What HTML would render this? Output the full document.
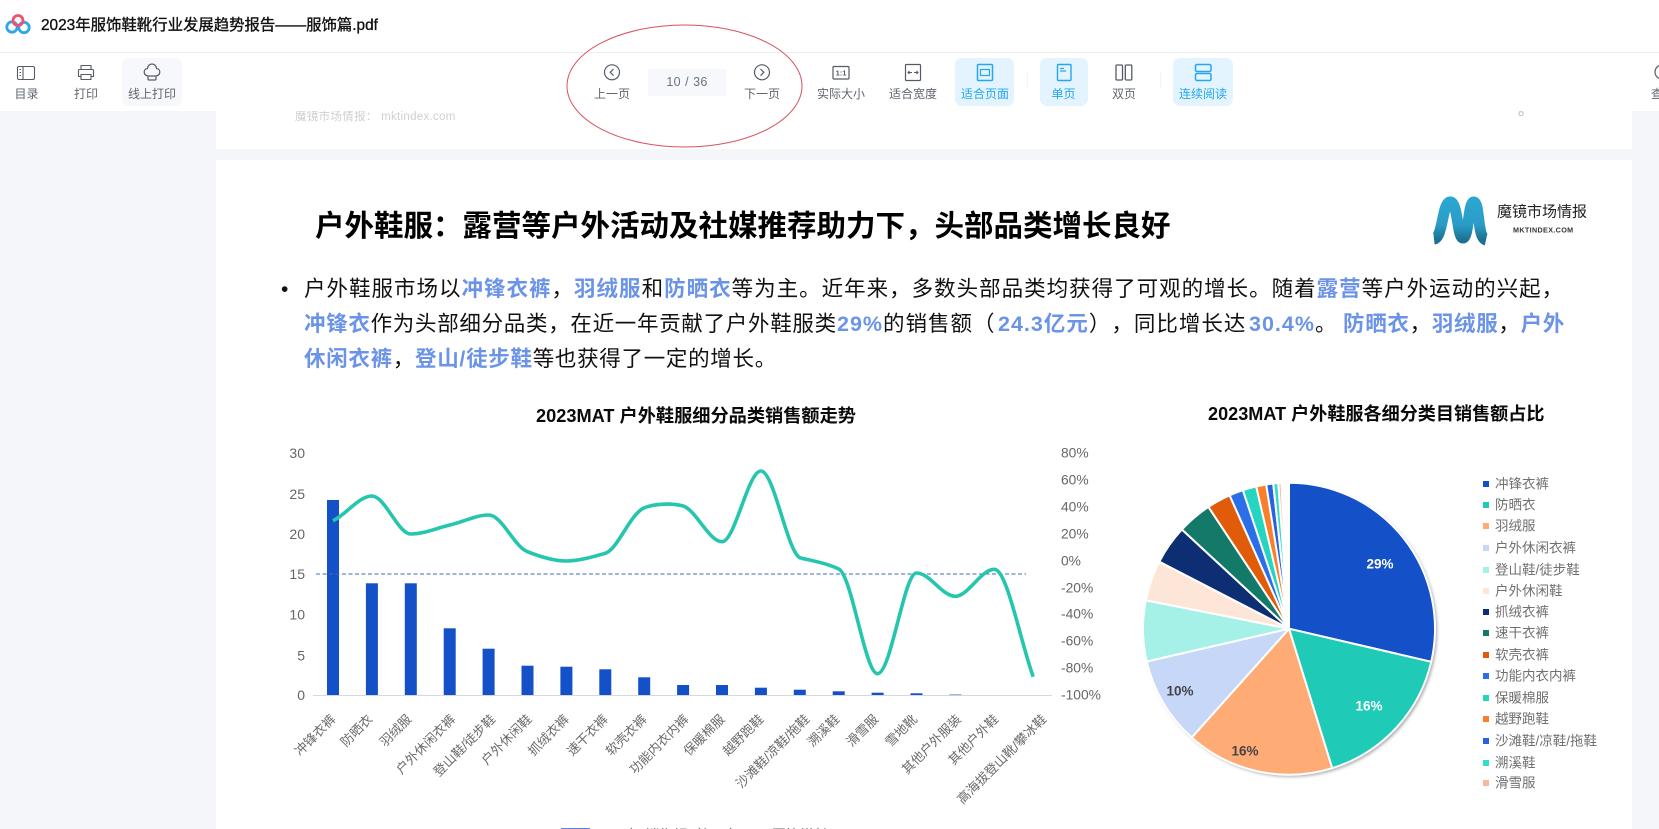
<!DOCTYPE html>
<html lang="zh">
<head>
<meta charset="utf-8">
<title>2023年服饰鞋靴行业发展趋势报告——服饰篇.pdf</title>
<style>
html,body{margin:0;padding:0;width:1659px;height:829px;overflow:hidden;background:#f5f6fa;font-family:"Liberation Sans","Noto Sans CJK SC",sans-serif;}
.abs{position:absolute;}
.page{position:absolute;background:#fff;left:216px;width:1416px;}
.top{position:absolute;left:0;top:0;width:1659px;height:111px;background:#fff;}
.hline{position:absolute;left:0;top:52px;width:1659px;height:1px;background:#eceef1;}
.title{position:absolute;left:41px;top:15px;font-size:15.4px;line-height:22px;color:#111;white-space:nowrap;-webkit-text-stroke:.35px #111;}
.bg{position:absolute;top:58px;height:48px;border-radius:7px;background:#e3f4fe;}
.l{position:absolute;top:86px;width:80px;margin-left:-40px;text-align:center;font-size:12px;line-height:16px;color:#5f6570;white-space:nowrap;}
.on{color:#25a6ee;}
.sep{position:absolute;top:72px;width:1px;height:16px;background:#f3f4f6;}
.pg{position:absolute;left:648px;top:69px;width:78px;height:27px;background:#f6f8fb;text-align:center;line-height:27px;font-size:12.5px;color:#6b7280;letter-spacing:.3px;word-spacing:.5px;border-radius:2px;}
.line{position:absolute;left:304px;font-size:21.5px;line-height:35px;color:#111;letter-spacing:1px;white-space:nowrap;text-spacing-trim:space-all;font-kerning:none;}
.line b{color:#6b93e8;font-weight:700;}
.t{letter-spacing:.7px;}
h1{position:absolute;margin:0;left:315px;top:205px;font-size:29.5px;line-height:44px;font-weight:700;color:#000;white-space:nowrap;}
svg{position:absolute;left:0;top:0;}
svg text{font-family:"Liberation Sans","Noto Sans CJK SC",sans-serif;}
</style>
</head>
<body>
<div class="page" style="top:0;height:149px"></div>
<div class="page" style="top:160px;height:669px"></div>

<div class="abs" style="left:295px;top:109px;font-size:11.5px;line-height:16px;color:#cfcfcf;white-space:nowrap;letter-spacing:.3px">魔镜市场情报： mktindex.com</div>
<div class="abs" style="left:1518px;top:105px;font-size:11px;line-height:16px;color:#bbb">8</div>

<h1>户外鞋服：露营等户外活动及社媒推荐助力下，头部品类增长良好</h1>

<div class="abs" style="left:281px;top:272px;font-size:21px;line-height:35px;color:#111">•</div>
<div class="line" style="top:272px">户外鞋服市场以<b>冲锋衣裤</b>，<b>羽绒服</b>和<b>防晒衣</b>等为主。近年来，多数头部品类均获得了可观的增长。随着<b>露营</b>等户外运动的兴起，</div>
<div class="line t" style="top:307px"><b>冲锋衣</b>作为头部细分品类，在近一年贡献了户外鞋服类</div>
<div class="line" style="top:307px;left:837px"><b>29%</b>的销售额（</div>
<div class="line" style="top:307px;left:998px"><b>24.3亿元</b>），同比增长达</div>
<div class="line" style="top:307px;left:1249px"><b>30.4%</b>。</div>
<div class="line t" style="top:307px;left:1343px"><b>防晒衣</b>，<b>羽绒服</b>，<b>户外</b></div>
<div class="line t" style="top:342px"><b>休闲衣裤</b>，<b>登山/徒步鞋</b>等也获得了一定的增长。</div>

<svg width="1659" height="829" viewBox="0 0 1659 829">
<defs>
<linearGradient id="lg" x1="0" y1="0" x2="0" y2="1">
<stop offset="0" stop-color="#2ba6d2"/><stop offset=".6" stop-color="#2b9cc6"/><stop offset="1" stop-color="#1b7192"/>
</linearGradient>
<filter id="ps" x="-10%" y="-10%" width="120%" height="120%"><feDropShadow dx="2" dy="2" stdDeviation="1.6" flood-color="#000" flood-opacity=".35"/></filter>
</defs>

<!-- logo -->
<path d="M1434 239C1443 238 1442 203 1450 202C1458 201 1457 238 1463 238C1469 238 1468 201 1474 202C1480 203 1477 238 1486 240" fill="none" stroke="url(#lg)" stroke-width="11"/>
<text x="1497" y="212" font-size="15" fill="#222" dominant-baseline="central">魔镜市场情报</text>
<text x="1513" y="230" font-size="7.2" fill="#333" letter-spacing=".35" font-weight="700" dominant-baseline="central">MKTINDEX.COM</text>

<!-- titles -->
<text x="536" y="416" font-size="18.2" font-weight="700" fill="#0a0a0a" dominant-baseline="central">2023MAT 户外鞋服细分品类销售额走势</text>
<text x="1208" y="414" font-size="18.1" font-weight="700" fill="#0a0a0a" dominant-baseline="central">2023MAT 户外鞋服各细分类目销售额占比</text>

<!-- axis labels -->
<g font-size="14" fill="#666" text-anchor="end" dominant-baseline="central">
<text x="305" y="453">30</text><text x="305" y="494">25</text><text x="305" y="534">20</text><text x="305" y="574">15</text><text x="305" y="614.5">10</text><text x="305" y="655.5">5</text><text x="305" y="695">0</text>
</g>
<g font-size="13.8" fill="#666" dominant-baseline="central">
<text x="1061" y="453">80%</text><text x="1061" y="480">60%</text><text x="1061" y="507">40%</text><text x="1061" y="534">20%</text><text x="1061" y="561">0%</text><text x="1061" y="588">-20%</text><text x="1061" y="614">-40%</text><text x="1061" y="641">-60%</text><text x="1061" y="668">-80%</text><text x="1061" y="695">-100%</text>
</g>

<!-- axis -->
<line x1="313" y1="695.5" x2="1052" y2="695.5" stroke="#d5d8de" stroke-width="1"/>

<!-- bars -->
<g fill="#1450c8">
<rect x="327" y="500" width="12" height="195"/>
<rect x="365.9" y="583.3" width="12" height="111.7"/>
<rect x="404.8" y="583.3" width="12" height="111.7"/>
<rect x="443.7" y="628.3" width="12" height="66.7"/>
<rect x="482.6" y="648.7" width="12" height="46.3"/>
<rect x="521.5" y="665.7" width="12" height="29.3"/>
<rect x="560.4" y="666.7" width="12" height="28.3"/>
<rect x="599.3" y="669.3" width="12" height="25.7"/>
<rect x="638.2" y="677.3" width="12" height="17.7"/>
<rect x="677.1" y="685" width="12" height="10"/>
<rect x="716" y="685" width="12" height="10"/>
<rect x="754.9" y="687.7" width="12" height="7.3"/>
<rect x="793.8" y="689.7" width="12" height="5.3"/>
<rect x="832.7" y="691.3" width="12" height="3.7"/>
<rect x="871.6" y="692.7" width="12" height="2.3"/>
<rect x="910.5" y="693.3" width="12" height="1.7"/>
<rect x="949.4" y="694.3" width="12" height=".8" opacity=".6"/>
</g>

<!-- dashed -->
<line x1="316" y1="574" x2="1026" y2="574" stroke="#3f68bd" stroke-width="1" stroke-dasharray="4 2.5"/>

<!-- line series -->
<path d="M333 520.7C346 514.7 359 496 371.9 496C385 496 398 534 410.8 534C424 534 437 528 449.7 525C463 522 476 515 488.6 515C502 515 514 546.7 527.5 551.7C540 556.7 553 561 566.4 561C579 561 592 557 605.3 553.3C618 549 630 514 644.2 507.8C655 503.500 672 503 683.1 506C696 510 709 541.7 722 541.7C735 541.7 748 471 760.9 471C774 471 787 551 799.8 557.7C813 561 826 563 838.7 569C852 575 865 673.7 877.6 673.7C891 673.7 904 573 916.5 573C930 573 942 596.3 955.4 596.3C968 596.3 981 569.3 994.3 569.3C1007 569.3 1020 640 1033.2 676.7" fill="none" stroke="#26c6ae" stroke-width="3.6"/>

<!-- x labels -->
<g font-size="12.9" fill="#6a6a6a" text-anchor="end">
<text transform="translate(336.5 720) rotate(-45)">冲锋衣裤</text>
<text transform="translate(373.4 720) rotate(-45)">防晒衣</text>
<text transform="translate(412.3 720) rotate(-45)">羽绒服</text>
<text transform="translate(456.2 720) rotate(-45)">户外休闲衣裤</text>
<text transform="translate(496.1 720) rotate(-45)">登山鞋/徒步鞋</text>
<text transform="translate(532.5 720) rotate(-45)">户外休闲鞋</text>
<text transform="translate(569.9 720) rotate(-45)">抓绒衣裤</text>
<text transform="translate(608.8 720) rotate(-45)">速干衣裤</text>
<text transform="translate(647.7 720) rotate(-45)">软壳衣裤</text>
<text transform="translate(689.6 720) rotate(-45)">功能内衣内裤</text>
<text transform="translate(725.5 720) rotate(-45)">保暖棉服</text>
<text transform="translate(764.4 720) rotate(-45)">越野跑鞋</text>
<text transform="translate(810.3 720) rotate(-45)">沙滩鞋/凉鞋/拖鞋</text>
<text transform="translate(840.2 720) rotate(-45)">溯溪鞋</text>
<text transform="translate(879.1 720) rotate(-45)">滑雪服</text>
<text transform="translate(918 720) rotate(-45)">雪地靴</text>
<text transform="translate(961.9 720) rotate(-45)">其他户外服装</text>
<text transform="translate(999.3 720) rotate(-45)">其他户外鞋</text>
<text transform="translate(1047.2 720) rotate(-45)">高海拔登山靴/攀冰鞋</text>
</g>

<!-- bottom legend -->
<rect x="561" y="828" width="29" height="3" fill="#5b86d8"/>
<text x="596" y="835" font-size="14" fill="#666" dominant-baseline="central">2023年 销售额（亿元）</text>
<text x="772" y="835" font-size="14" fill="#666" dominant-baseline="central">同比增长</text>

<!-- pie -->
<circle cx="1289" cy="628.7" r="146" fill="#fff" filter="url(#ps)"/>
<g stroke="#fff" stroke-width="2" stroke-linejoin="round">
<path d="M1289 628.7L1289 482.7A146 146 0 0 1 1431.2 661.8Z" fill="#1450c8"/>
<path d="M1289 628.7L1431.2 661.8A146 146 0 0 1 1332.2 768.2Z" fill="#1fcbb6"/>
<path d="M1289 628.7L1332.2 768.2A146 146 0 0 1 1191.7 737.5Z" fill="#ffab76"/>
<path d="M1289 628.7L1191.7 737.5A146 146 0 0 1 1146.7 661.5Z" fill="#c6d7f8"/>
<path d="M1289 628.7L1146.7 661.5A146 146 0 0 1 1145.8 600.3Z" fill="#a5f1e8"/>
<path d="M1289 628.7L1145.8 600.3A146 146 0 0 1 1159.3 561.7Z" fill="#fde6d8"/>
<path d="M1289 628.7L1159.3 561.7A146 146 0 0 1 1181.9 529.5Z" fill="#0d2e73"/>
<path d="M1289 628.7L1181.9 529.5A146 146 0 0 1 1208.4 506.9Z" fill="#137a6a"/>
<path d="M1289 628.7L1208.4 506.9A146 146 0 0 1 1229.6 495.3Z" fill="#e05c0a"/>
<path d="M1289 628.7L1229.6 495.3A146 146 0 0 1 1242.9 490.2Z" fill="#2a6fe8"/>
<path d="M1289 628.7L1242.9 490.2A146 146 0 0 1 1256.2 486.4Z" fill="#24d5c0"/>
<path d="M1289 628.7L1256.2 486.4A146 146 0 0 1 1266.2 484.5Z" fill="#f97f2a"/>
<path d="M1289 628.7L1266.2 484.5A146 146 0 0 1 1273.2 483.5Z" fill="#2a62dd"/>
<path d="M1289 628.7L1273.2 483.5A146 146 0 0 1 1278.3 483.1Z" fill="#35dcc6"/>
<path d="M1289 628.7L1278.3 483.1A146 146 0 0 1 1281.4 482.9Z" fill="#f8b998"/>
</g>
<g font-size="13.5" font-weight="700" text-anchor="middle" dominant-baseline="central">
<text x="1380" y="564" fill="#fff">29%</text>
<text x="1369" y="706" fill="#fff">16%</text>
<text x="1245" y="751" fill="#444">16%</text>
<text x="1180" y="691" fill="#444">10%</text>
</g>

<!-- pie legend -->
<g>
<rect x="1483" y="481" width="6" height="6" fill="#1450c8"/>
<rect x="1483" y="502" width="6" height="6" fill="#1fcbb6"/>
<rect x="1483" y="523" width="6" height="6" fill="#ffab76"/>
<rect x="1483" y="545" width="6" height="6" fill="#c6d7f8"/>
<rect x="1483" y="567" width="6" height="6" fill="#a5f1e8"/>
<rect x="1483" y="588" width="6" height="6" fill="#fde6d8"/>
<rect x="1483" y="609" width="6" height="6" fill="#0d2e73"/>
<rect x="1483" y="630" width="6" height="6" fill="#137a6a"/>
<rect x="1483" y="652" width="6" height="6" fill="#e05c0a"/>
<rect x="1483" y="673" width="6" height="6" fill="#2a6fe8"/>
<rect x="1483" y="695" width="6" height="6" fill="#24d5c0"/>
<rect x="1483" y="716" width="6" height="6" fill="#f97f2a"/>
<rect x="1483" y="738" width="6" height="6" fill="#2a62dd"/>
<rect x="1483" y="760" width="6" height="6" fill="#35dcc6"/>
<rect x="1483" y="780" width="6" height="6" fill="#f8b998"/>
</g>
<g font-size="13.5" fill="#707070" dominant-baseline="central">
<text x="1495" y="484">冲锋衣裤</text>
<text x="1495" y="505">防晒衣</text>
<text x="1495" y="526">羽绒服</text>
<text x="1495" y="548">户外休闲衣裤</text>
<text x="1495" y="570">登山鞋/徒步鞋</text>
<text x="1495" y="591">户外休闲鞋</text>
<text x="1495" y="612">抓绒衣裤</text>
<text x="1495" y="633">速干衣裤</text>
<text x="1495" y="655">软壳衣裤</text>
<text x="1495" y="676">功能内衣内裤</text>
<text x="1495" y="698">保暖棉服</text>
<text x="1495" y="719">越野跑鞋</text>
<text x="1495" y="741">沙滩鞋/凉鞋/拖鞋</text>
<text x="1495" y="763">溯溪鞋</text>
<text x="1495" y="783">滑雪服</text>
</g>
</svg>

<!-- toolbar -->
<div class="top"></div>
<div class="hline"></div>
<div class="title">2023年服饰鞋靴行业发展趋势报告——服饰篇.pdf</div>
<div class="bg" style="left:122px;width:60px;background:#f7f8fb"></div>
<div class="bg" style="left:955px;width:59px"></div>
<div class="bg" style="left:1040px;width:48px"></div>
<div class="bg" style="left:1173px;width:60px"></div>
<div class="sep" style="left:1027px"></div>
<div class="sep" style="left:1160px"></div>
<div class="pg">10 / 36</div>

<div class="l" style="left:26.5px">目录</div>
<div class="l" style="left:86px">打印</div>
<div class="l" style="left:152px">线上打印</div>
<div class="l" style="left:612px">上一页</div>
<div class="l" style="left:762px">下一页</div>
<div class="l" style="left:841px">实际大小</div>
<div class="l" style="left:913px">适合宽度</div>
<div class="l on" style="left:985px">适合页面</div>
<div class="l on" style="left:1063.5px">单页</div>
<div class="l" style="left:1124px">双页</div>
<div class="l on" style="left:1203px">连续阅读</div>
<div class="l" style="left:1659px;margin-left:-8px;width:auto;text-align:left">查看</div>

<svg width="1659" height="111" viewBox="0 0 1659 111" fill="none">
<!-- app logo -->
<circle cx="12" cy="27" r="5.2" stroke="#2ba8e6" stroke-width="2.8"/>
<circle cx="24" cy="27.5" r="5.2" stroke="#2ba8e6" stroke-width="2.8"/>
<circle cx="18" cy="20.5" r="5" stroke="#f0506e" stroke-width="2.8"/>
<!-- toc -->
<rect x="17.5" y="66.5" width="17" height="13" rx="1.5" stroke="#555b66" stroke-width="1.1"/>
<path d="M23 66.5V79.5M19.5 69.5H21M19.5 72.5H21M19.5 75.5H21" stroke="#555b66" stroke-width="1.1"/>
<!-- print -->
<path d="M81 70V65.5H91V70M81 76.5H78.5V70.5Q78.5 69.5 79.5 69.5H92.5Q93.5 69.5 93.5 70.5V76.5H91M81 74.5H91V79.5H81Z" stroke="#555b66" stroke-width="1.1" stroke-linejoin="round"/>
<!-- cloud print -->
<path d="M148 76C143 75 143 69 147.500 68.500C148 62.500 156 62.500 156.500 68.500C161 69 161 75 156 76Z" stroke="#555b66" stroke-width="1.200" stroke-linejoin="round"/>
<path d="M148 76.500V79Q148 80 149 80H155Q156 80 156 79V76.500" stroke="#555b66" stroke-width="1.200"/>
<!-- prev / next -->
<circle cx="612" cy="72.300" r="7.500" stroke="#555b66" stroke-width="1.200"/>
<path d="M613.500 69L610.200 72.300L613.500 75.600" stroke="#555b66" stroke-width="1.200"/>
<circle cx="762" cy="72.300" r="7.500" stroke="#555b66" stroke-width="1.200"/>
<path d="M760.500 69L763.800 72.300L760.500 75.600" stroke="#555b66" stroke-width="1.200"/>
<!-- 1:1 -->
<rect x="833" y="66.500" width="16" height="12.500" rx="1" stroke="#555b66" stroke-width="1.200"/>
<text x="841" y="75.500" font-size="7.500" font-weight="700" fill="#555b66" text-anchor="middle">1:1</text>
<!-- fit width -->
<rect x="905.500" y="64.500" width="15" height="16" rx="1" stroke="#555b66" stroke-width="1.200"/>
<path d="M908 72.500H912M909.500 71L908 72.500L909.500 74M918 72.500H914M916.500 71L918 72.500L916.500 74" stroke="#555b66" stroke-width="1.100"/>
<!-- fit page -->
<rect x="977.500" y="64.500" width="15" height="16" rx="1" stroke="#25a6ee" stroke-width="1.500"/>
<rect x="980.500" y="69.500" width="9" height="6" stroke="#25a6ee" stroke-width="1.200"/>
<!-- single -->
<rect x="1057.500" y="64.500" width="13.500" height="16" rx="1" stroke="#25a6ee" stroke-width="1.400"/>
<path d="M1060 68.500H1064M1060 71H1066" stroke="#25a6ee" stroke-width="1.200"/>
<!-- double -->
<rect x="1116" y="65" width="6.500" height="15" rx="1" stroke="#555b66" stroke-width="1.300"/>
<rect x="1125.300" y="65" width="6.500" height="15" rx="1" stroke="#555b66" stroke-width="1.300"/>
<!-- continuous -->
<rect x="1195.500" y="64.500" width="15.500" height="7" rx="1.500" stroke="#25a6ee" stroke-width="1.500"/>
<rect x="1195.500" y="73.500" width="15.500" height="7" rx="1.500" stroke="#25a6ee" stroke-width="1.500"/>
<!-- right cut icon -->
<circle cx="1662" cy="72" r="7" stroke="#555b66" stroke-width="1.200"/>
</svg>

<!-- annotation ellipse -->
<svg width="1659" height="829" viewBox="0 0 1659 829" fill="none" style="pointer-events:none">
<ellipse cx="684.500" cy="86" rx="117.500" ry="61" stroke="#d8525e" stroke-width="1"/>
</svg>
</body>
</html>
